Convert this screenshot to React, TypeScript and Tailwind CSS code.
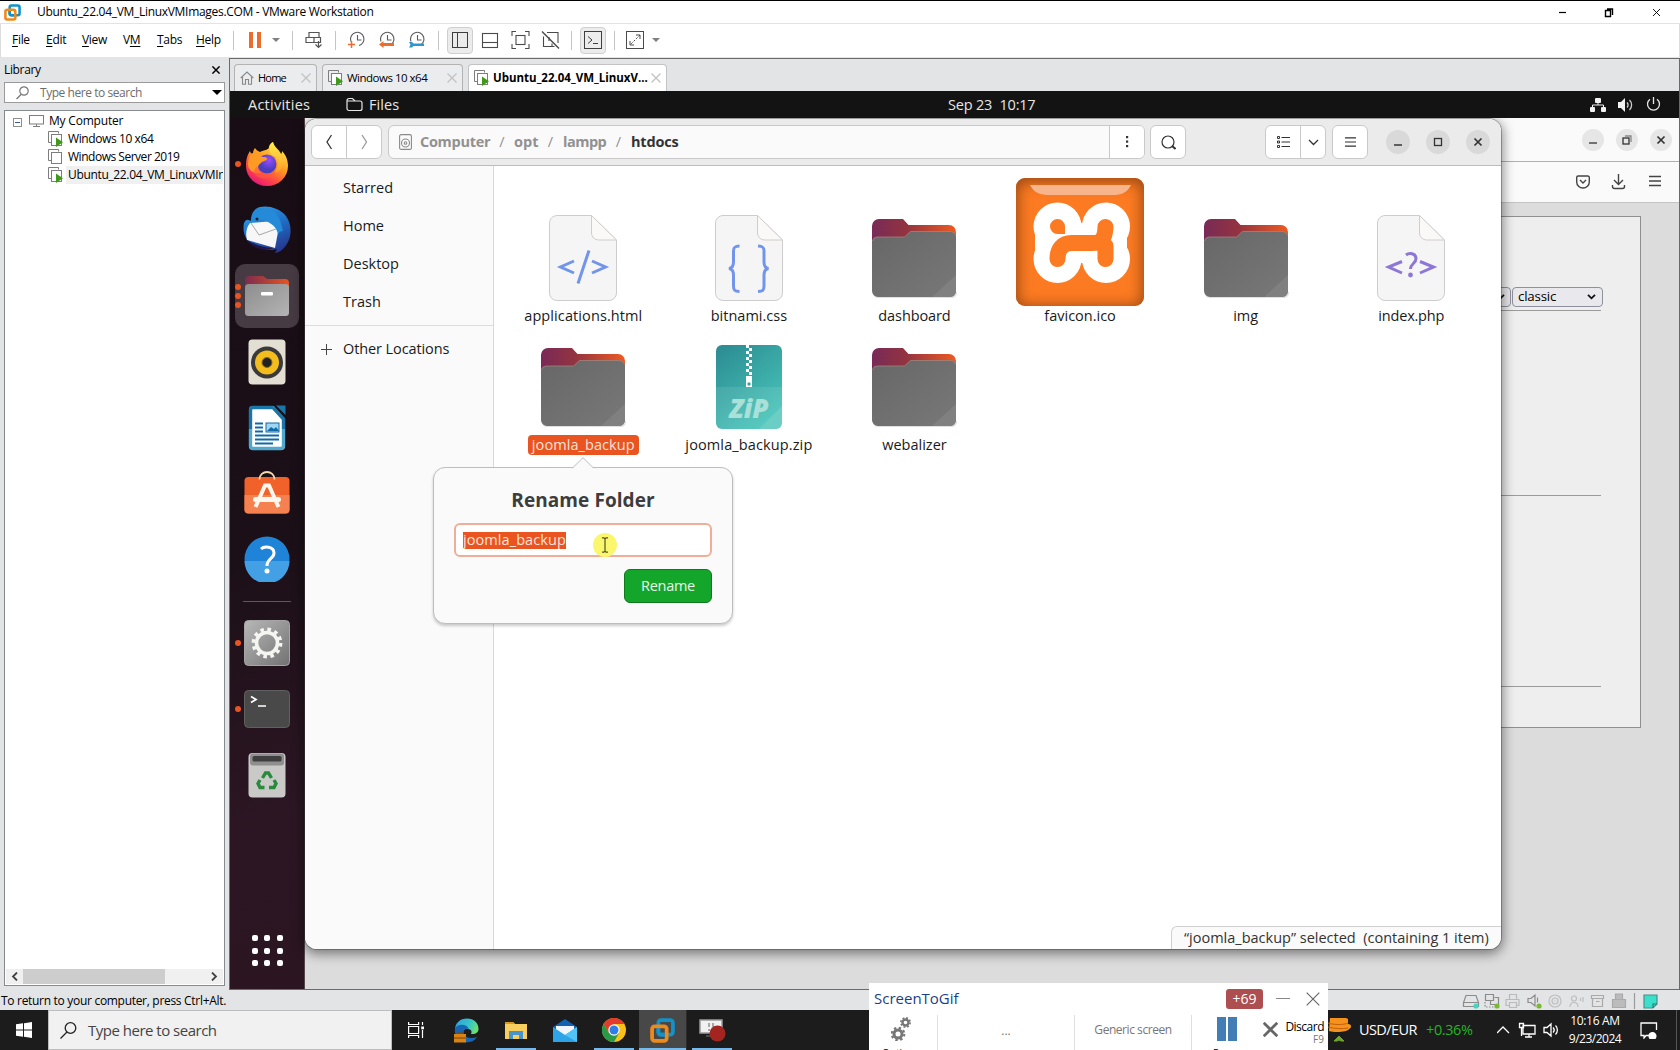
import React from "react";

const ui = "font-['Open_Sans','Noto_Sans',sans-serif]";

function T({ c = "", children }: { c?: string; children: React.ReactNode }) {
  return <span className={"whitespace-pre " + c}>{children}</span>;
}

function VmIcon({ run = true }: { run?: boolean }) {
  return (
    <svg width="16" height="16" viewBox="0 0 16 16" fill="none" stroke="#7d7d7d" className="shrink-0">
      <path d="M3.5 12V11.5H.5V.5h10v2" />
      <rect x="3.5" y="3.5" width="10" height="11" fill="#fff" />
      {run && <path d="M8 6.5l7 4.8-7 4.7z" fill="#3f9a1c" stroke="none" />}
    </svg>
  );
}

function VmwareLogo({ s }: { s: number }) {
  return (
    <svg width={s} height={s} viewBox="0 0 24 24" fill="none" strokeWidth="3.6" className="shrink-0">
      <rect x="8" y="2" width="14" height="14" rx="2.5" stroke="#1192c9" />
      <rect x="2" y="8" width="14" height="14" rx="2.5" stroke="#ee8a1c" />
      <path d="M8 10v3.500a2.500 2.500 0 002.500 2.500H14" stroke="#1192c9" />
    </svg>
  );
}

function Cross({ s, c = "#222", w = 1.2 }: { s: number; c?: string; w?: number }) {
  return (
    <svg width={s} height={s} viewBox="0 0 10 10" stroke={c} strokeWidth={w} className="shrink-0">
      <path d="M.5.5l9 9M9.500.5l-9 9" />
    </svg>
  );
}

function TitleBar() {
  return (
    <div className="flex h-[24px] shrink-0 items-center border-b border-t border-b-[#e3e3e3] border-t-black bg-white text-[12px]">
      <div className="ml-[4px] flex w-[33px] items-center"><VmwareLogo s={17} /></div>
      <T c="tracking-[-0.3px]">Ubuntu_22.04_VM_LinuxVMImages.COM - VMware Workstation</T>
      <div className="ml-auto flex items-center">
        <svg width="120" height="12" viewBox="0 0 120 12" fill="none" stroke="#000" className="mr-[9px]">
          <path d="M8 6.500h7" strokeWidth="1.200" />
          <path d="M54.500 4.500h5v6h-5zM56 3h5.500v6" strokeWidth="1.400" />
          <path d="M102 3l7 7M109 3l-7 7" strokeWidth=".9" />
        </svg>
      </div>
    </div>
  );
}

const menus: [string, string, string, string][] = [
  ["", "F", "ile", "w-[34px]"],
  ["", "E", "dit", "w-[36px]"],
  ["", "V", "iew", "w-[41px]"],
  ["V", "M", "", "w-[34px]"],
  ["", "T", "abs", "w-[39px]"],
  ["", "H", "elp", "w-[37px]"],
];

function Clock({ children }: { children: React.ReactNode }) {
  return (
    <svg width="20" height="20" viewBox="0 0 20 20" fill="none" stroke="#5a5a5a" strokeWidth="1.1">
      <path d="M4 11.500A6.700 6.700 0 1 1 12 15.500M10.500 5v5h4" />
      {children}
    </svg>
  );
}

function MenuBar() {
  const sep = <div className="h-[19px] w-px bg-[#c4c4c4]" />;
  return (
    <div className="flex h-[33px] shrink-0 items-center border-x border-[#dcdcdc] bg-white pb-px pl-[11px] text-[12px]">
      {menus.map((m, i) => (
        <div key={i} className={m[3]}>
          <T c="tracking-[-0.3px]">{m[0]}<span className="underline underline-offset-2">{m[1]}</span>{m[2]}</T>
        </div>
      ))}
      {sep}
      <div className="flex w-[58px] items-center pl-[15px]">
        <div className="h-[16px] w-[4px] bg-[#ee6b2d]" />
        <div className="ml-[4px] h-[16px] w-[4px] bg-[#ee6b2d]" />
        <div className="ml-[11px] border-x-4 border-t-4 border-x-transparent border-t-[#7f7f7f]" />
      </div>
      {sep}
      <svg width="42" height="20" viewBox="0 0 42 20" fill="none" stroke="#555" strokeWidth="1.200">
        <path d="M16 7.500V2.500h10v5M13 7.500h14.500v5H13zM21 7.500v5" />
        <path d="M25.500 11v6.500M22.500 14.500l3 3 3-3" />
      </svg>
      {sep}
      <div className="flex w-[102px] items-center gap-[10px] pl-[11px]">
        <Clock><path d="M1 14.500h7M4.500 11v7" stroke="#ee6b2d" strokeWidth="1.500" /></Clock>
        <Clock><path d="M2 14.500l4.500-3.500v2H17v3H6.500v2z" fill="#ee6b2d" stroke="none" /></Clock>
        <Clock><path d="M2 12h3l1.500 1.500H17v2.500H6.500L5 17.500H2l1.500-2.800z" fill="#2f95cf" stroke="none" /></Clock>
      </div>
      {sep}
      <div className="ml-[8px] flex h-[27px] w-[26px] items-center justify-center rounded border border-[#cfcfcf] bg-[#ececec]">
        <svg width="16" height="16" fill="none" stroke="#3f3f3f"><rect x=".5" y=".5" width="15" height="15" /><path d="M5.500 1v14" /></svg>
      </div>
      <svg width="98" height="20" viewBox="0 0 98 20" fill="none" stroke="#4a4a4a" strokeWidth="1.100">
        <rect x="9.500" y="3.500" width="15" height="14" /><path d="M10 12.500h15" />
        <path d="M39 6V1.500h4M52 1.500h4V6M56 14v4.500h-4M43 18.500h-4V14" /><rect x="43" y="5.500" width="9" height="9" />
        <path d="M69 1.500l17 17" strokeWidth="1.400" /><path d="M74 2.500h11v10.500M81.500 16.500H70.500V6.500M76 11V7M79 13.500v3" />
      </svg>
      {sep}
      <div className="ml-[8px] mr-[8px] flex h-[27px] w-[26px] items-center justify-center rounded border border-[#cfcfcf] bg-[#ececec]">
        <svg width="18" height="18" fill="none" stroke="#3f3f3f"><rect x=".5" y=".5" width="17" height="17" /><path d="M4 5.500l4 3.500-4 3.500M9 12.500h5" /></svg>
      </div>
      {sep}
      <svg width="18" height="18" fill="none" stroke="#4a4a4a" className="ml-[11px]">
        <rect x=".5" y=".5" width="17" height="17" /><path d="M10 4h4v4M4 10v4h4" /><path d="M14 4L4 14" strokeDasharray="2 1.500" />
      </svg>
      <div className="ml-[8px] border-x-4 border-t-4 border-x-transparent border-t-[#7f7f7f]" />
    </div>
  );
}

function Library() {
  return (
    <div className="flex w-[229px] shrink-0 flex-col pb-[4px] pl-[4px] pr-[4px] text-[12px]">
      <div className="flex h-[25px] items-center justify-between pr-[5px]"><T c="tracking-[-0.35px]">Library</T><Cross s={8} c="#000" w={1.800} /></div>
      <div className="flex h-[21px] items-center border border-[#9a9a9a] bg-white pl-[10px] pr-[2px] text-[#6d6d6d]">
        <svg width="15" height="14" viewBox="0 0 15 14" fill="none" stroke="#777" strokeWidth="1.200" className="mr-[10px]"><circle cx="9" cy="5" r="4.200" /><path d="M6 8.500L1.500 13" /></svg>
        <T c="tracking-[-0.45px]">Type here to search</T>
        <div className="ml-auto border-x-[5px] border-t-[5px] border-x-transparent border-t-black" />
      </div>
      <div className="mt-[7px] flex min-h-0 flex-1 flex-col overflow-hidden border border-[#868a91] bg-white p-px">
        <div className="flex h-[18px] items-center pl-[7px]">
          <svg width="9" height="9" className="mr-[7px] mt-[3px]" fill="#fff" stroke="#8d8d8d"><rect x=".5" y=".5" width="8" height="8" /><path d="M2 4.500h5" stroke="#3a55a0" /></svg>
          <svg width="15" height="12" fill="none" stroke="#7d7d7d" className="mr-[5px]"><rect x=".5" y=".5" width="14" height="8.500" /><path d="M4 11.500h7M7.500 9v2" /></svg>
          <T c="tracking-[-0.2px]">My Computer</T>
        </div>
        <div className="flex h-[18px] items-center gap-[4px] pl-[42px]"><VmIcon /><T c="tracking-[-0.4px]">Windows 10 x64</T></div>
        <div className="flex h-[18px] items-center gap-[4px] pl-[42px]"><VmIcon run={false} /><T c="tracking-[-0.48px]">Windows Server 2019</T></div>
        <div className="flex h-[18px] items-center gap-[2px] pl-[42px]">
          <VmIcon />
          <div className="flex h-[18px] flex-1 items-center overflow-hidden bg-[#f0f0f0] pl-[2px]"><T c="tracking-[-0.34px]">Ubuntu_22.04_VM_LinuxVMIr</T></div>
        </div>
        <div className="mt-auto flex h-[15px] items-center bg-[#f0f0f0] pl-[5px] pr-[5px]">
          <svg width="12" height="9" fill="none" stroke="#404040" strokeWidth="1.800"><path d="M6 .5l-4 4 4 4" /></svg>
          <div className="h-[15px] w-[142px] bg-[#cdcdcd]" />
          <svg width="7" height="9" fill="none" stroke="#404040" strokeWidth="1.800" className="ml-auto"><path d="M1 .5l4 4-4 4" /></svg>
        </div>
      </div>
    </div>
  );
}

function Tabs() {
  return (
    <div className="flex h-[32px] shrink-0 items-end pl-[4px] text-[11.500px]">
      <div className="mr-[5px] flex h-[27px] w-[83px] items-center rounded-t border border-b-0 border-[#b3b3b3] bg-[#ebecee] pl-[5px]">
        <svg width="14" height="14" fill="none" stroke="#888" strokeWidth="1.100"><path d="M.7 7L7 1l6.300 6M2.500 6v7.300h3V8.500h3v4.800h3V6" /></svg>
        <span className="ml-[4px]"><T c="text-[11px] tracking-[-0.8px]">Home</T></span>
        <span className="ml-auto mr-[5px]"><Cross s={10} c="#c3c3c3" w={1.400} /></span>
      </div>
      <div className="mr-[5px] flex h-[27px] w-[141px] items-center rounded-t border border-b-0 border-[#b3b3b3] bg-[#ebecee] pl-[5px]">
        <VmIcon /><span className="ml-[3px]"><T c="tracking-[-0.5px]">Windows 10 x64</T></span>
        <span className="ml-auto mr-[5px]"><Cross s={10} c="#c3c3c3" w={1.400} /></span>
      </div>
      <div className="flex h-[27px] w-[199px] items-center rounded-t border border-b-0 border-[#c3c3c3] bg-white pl-[5px] font-bold">
        <VmIcon /><span className="ml-[3px]"><T>Ubuntu_22.04_VM_LinuxV...</T></span>
        <span className="ml-auto mr-[5px]"><Cross s={10} c="#c3c3c3" w={1.400} /></span>
      </div>
    </div>
  );
}

function TopBar() {
  return (
    <div className="flex h-[27px] shrink-0 items-center bg-[#131313] text-[14.500px] text-[#e6e6e6]">
      <div className="w-[116px] pl-[18px]"><T c="tracking-[0.25px]">Activities</T></div>
      <svg width="17" height="15" fill="none" stroke="#e6e6e6" strokeWidth="1.200"><path d="M1 3.500a2 2 0 012-2h3.500L9 4h5a2 2 0 012 2v5.500a2 2 0 01-2 2H3a2 2 0 01-2-2zM1 4h8" /></svg>
      <div className="ml-[6px] w-[579px]"><T c="tracking-[0.1px]">Files</T></div>
      <T c="tracking-[-0.18px]">Sep 23  10:17</T>
      <div className="ml-auto mr-[18px] flex items-center gap-[12px]">
        <svg width="16" height="14" fill="#f2f2f2"><rect x="5" width="6" height="5" rx="1" /><rect y="9" width="5" height="5" rx="1" /><rect x="11" y="9" width="5" height="5" rx="1" /><path d="M2.500 10V7h11v3M8 4v3" fill="none" stroke="#f2f2f2" /></svg>
        <svg width="16" height="14" fill="#f2f2f2"><path d="M0 4h3l4-4v14l-4-4H0z" /><path d="M9 4.500a3.500 3.500 0 010 5M11.500 2a7 7 0 010 10" fill="none" stroke="#cfcfcf" strokeWidth="1.300" /></svg>
        <svg width="15" height="15" fill="none" stroke="#e6e6e6" strokeWidth="1.300"><path d="M7.500 0v7M4 2.200a6 6 0 107 0" /></svg>
      </div>
    </div>
  );
}

function Firefox() {
  return (
    <svg width="44" height="46" viewBox="0 0 44 46">
      <defs>
        <linearGradient id="ff" x1=".8" y1=".1" x2=".25" y2="1"><stop offset="0" stopColor="#ffe14a" /><stop offset=".4" stopColor="#ff9a1f" /><stop offset=".7" stopColor="#ff4a45" /><stop offset="1" stopColor="#e5127c" /></linearGradient>
        <radialGradient id="fp" cx=".6" cy=".3"><stop offset="0" stopColor="#9a4dff" /><stop offset="1" stopColor="#4a3fc0" /></radialGradient>
        <linearGradient id="fy" x1="0" y1="0" x2="0" y2="1"><stop offset="0" stopColor="#fff04a" /><stop offset="1" stopColor="#ff9a2a" /></linearGradient>
      </defs>
      <path d="M5 10c1 3 2 3 3 2 0-2 1-4 2-5 1 2 3 3 5 4C19 9 24 9 24 6c0-2 3-5 4-5 1 5 7 8 8 12 1-1 1-2 1-3 3 3 6 8 6 15a21 20 0 01-42 0C1 17 3 13 5 10z" fill="url(#ff)" />
      <path d="M28 1c-4 4-5 9-1 13 8 2 8 12 2 18 7-1 11-7 8-16-2-5-8-9-9-15z" fill="url(#fy)" />
      <circle cx="22" cy="23" r="9.500" fill="url(#fp)" />
      <path d="M6 13c4-2 8-2 11 3 3 0 5 0 5 2 0 2-5 2-6 4-4 2-4 7 0 10-9 1-13-4-13-9 0-4 2-8 3-10z" fill="#ff9a25" />
      <path d="M12 25c2 8 13 10 19 4-3 11-18 11-23 2z" fill="#ff5c3c" opacity=".6" />
    </svg>
  );
}

function Thunderbird() {
  return (
    <svg width="48" height="48" viewBox="0 0 48 48">
      <defs><linearGradient id="tb" x1=".2" y1="0" x2=".7" y2="1"><stop offset="0" stopColor="#2f9de8" /><stop offset=".5" stopColor="#1f6fc6" /><stop offset="1" stopColor="#27358c" /></linearGradient></defs>
      <path d="M13 3C20-2 36 1 43 10c7 10 6 24-3 33-3 3-7 4-8 4l2-4c-7 2-12 1-22-3C3 36-1 27 1 17 3 12 6 14 8 15 9 10 10 6 13 3z" fill="url(#tb)" />
      <path d="M7 17l24-2 4 11-3 16-28-8C2 26 4 21 7 17z" fill="#f7f7f7" />
      <path d="M8 17l8 12 17-6" fill="none" stroke="#a8a8a8" strokeWidth="1" />
      <path d="M13 3c8-3 20 0 24 11l3 11c-2 0-4 1-5 3-1-5-4-9-10-12-7-4-13-2-17 0 0-6 1-10 5-13z" fill="#258bd8" />
      <path d="M4 34c6 3 14 8 26 8-6 4-21 1-26-8z" fill="#221848" />
      <circle cx="14" cy="13" r="1.500" fill="#123" />
    </svg>
  );
}

function FilesIcon() {
  return (
    <svg width="46" height="42" viewBox="0 0 46 42">
      <defs>
        <linearGradient id="fo"><stop offset="0" stopColor="#7b2b50" /><stop offset="1" stopColor="#e95420" /></linearGradient>
        <linearGradient id="fg" x1="0" y1="0" x2="1" y2="1"><stop offset="0" stopColor="#8d8d8d" /><stop offset="1" stopColor="#b4b4b4" /></linearGradient>
      </defs>
      <path d="M1 5a4 4 0 014-4h14l4 3h18a4 4 0 014 4v12H1z" fill="url(#fo)" />
      <rect x="1" y="9" width="44" height="32" rx="3.500" fill="url(#fg)" />
      <rect x="17" y="17" width="12" height="3.500" rx="1" fill="#fff" />
    </svg>
  );
}

function DockItem({ h, dots = 0, active, children }: { h: string; dots?: number; active?: boolean; children: React.ReactNode }) {
  return (
    <div className={"relative flex w-full shrink-0 items-center justify-center " + h}>
      {active && <div className="absolute inset-x-[5px] inset-y-px rounded-[10px] bg-[#463b42]" />}
      <div className="absolute left-[5px] flex flex-col gap-[3px]">
        {Array.from({ length: dots }, (_, i) => <div key={i} className="size-[6px] rounded-full bg-[#e95420]" />)}
      </div>
      <div className="relative">{children}</div>
    </div>
  );
}

function Dock() {
  return (
    <div className="relative flex h-full w-[75px] shrink-0 flex-col border-r border-[#55454e] bg-[linear-gradient(160deg,#180d14_0%,#1c1018_50%,#2c1623_80%,#2b1521_100%)] pt-[13px]">
      <DockItem h="h-[66px]" dots={1}><Firefox /></DockItem>
      <DockItem h="h-[66px]"><Thunderbird /></DockItem>
      <DockItem h="h-[66px]" dots={3} active><FilesIcon /></DockItem>
      <DockItem h="h-[66px]">
        <svg width="38" height="46" viewBox="0 0 38 46"><rect x=".5" y=".5" width="37" height="45" rx="4" fill="#e4dfd3" /><circle cx="19" cy="23.500" r="16" fill="#3a3a3a" /><circle cx="19" cy="23.500" r="12" fill="#f2bd1d" /><circle cx="19" cy="23.500" r="5" fill="#222" stroke="#8a6a10" /></svg>
      </DockItem>
      <DockItem h="h-[66px]">
        <svg width="38" height="46" viewBox="0 0 38 46" className="-mt-px">
          <path d="M1 5a4 4 0 014-4h20l12 13v27a4 4 0 01-4 4H5a4 4 0 01-4-4z" fill="#fff" />
          <path d="M25 2.500H5A2.500 2.500 0 002.500 5v19M25 2.500L35.500 14v10" fill="none" stroke="#1a76a8" strokeWidth="3.400" />
          <path d="M2.500 24v17A2.500 2.500 0 005 43.500h28a2.500 2.500 0 002.500-2.500V24" fill="none" stroke="#4fa9cf" strokeWidth="3.400" />
          <path d="M28 .5h9.500V10z" fill="#1a76a8" />
          <path d="M7 18.500h8M7 22.500h8M7 26.500h8M7 30.500h24M7 34.500h24M7 38.500h18" stroke="#0f6aa5" strokeWidth="1.800" />
          <rect x="18" y="18" width="13" height="9" fill="#9fd6f5" stroke="#0f6aa5" /><path d="M19 26l4-4 3 2 2-2 3 4z" fill="#0f6aa5" />
        </svg>
      </DockItem>
      <DockItem h="h-[66px]">
        <svg width="46" height="44" viewBox="0 0 46 44" className="-mt-[5px]">
          <rect x=".5" y="7" width="45" height="36.500" rx="4" fill="#f0622a" /><path d="M.5 25h45v14.500a4 4 0 01-4 4h-37a4 4 0 01-4-4z" fill="#f58151" />
          <path d="M15.500 9.500c0-10 15-10 15 0" fill="none" stroke="#f7d9b0" strokeWidth="1.800" />
          <path d="M11.500 37L21 15.500h4L34.500 37" fill="none" stroke="#fff6ee" strokeWidth="4" /><rect x="9" y="27" width="28" height="5" rx="2.500" fill="#fff6ee" />
        </svg>
      </DockItem>
      <DockItem h="h-[66px]">
        <svg width="46" height="46" viewBox="0 0 46 46" className="-mt-[2px]"><circle cx="23" cy="23" r="22.500" fill="#1f83d8" /><path d="M.5 25a22.500 22.500 0 0045 0z" fill="#43a0e5" /><path d="M17 13c3-3 13-3 13 4 0 6-7 5-7 13" fill="none" stroke="#fff" strokeWidth="3" /><circle cx="23" cy="35" r="2.500" fill="#fff" /></svg>
      </DockItem>
      <div className="mx-auto mt-[8px] h-px w-[48px] shrink-0 bg-[#62555c]" />
      <DockItem h="h-[66px] mt-[8px]" dots={1}>
        <svg width="46" height="46" viewBox="0 0 46 46">
          <defs><linearGradient id="sg" x1="0" y1="0" x2="1" y2="1"><stop offset="0" stopColor="#b8b8b8" /><stop offset="1" stopColor="#727272" /></linearGradient></defs>
          <rect x=".5" y=".5" width="45" height="45" rx="4" fill="url(#sg)" stroke="#a5a5a5" />
          <circle cx="23" cy="23" r="10.500" fill="none" stroke="#f5f5f2" strokeWidth="3.600" />
          <circle cx="23" cy="23" r="13.600" fill="none" stroke="#f5f5f2" strokeWidth="3.600" strokeDasharray="3.560 3.560" />
        </svg>
      </DockItem>
      <DockItem h="h-[66px]" dots={1}>
        <svg width="46" height="38" viewBox="0 0 46 38"><rect x=".5" y=".5" width="45" height="37" rx="4" fill="#494949" stroke="#606060" /><path d="M7 6.500l5 3-5 3M14 16h8" fill="none" stroke="#fff" strokeWidth="1.700" /></svg>
      </DockItem>
      <DockItem h="h-[66px]">
        <svg width="38" height="46" viewBox="0 0 38 46">
          <rect x=".5" y="1" width="37" height="44.500" rx="4" fill="#c9c9c7" /><rect x="2" y="1.500" width="34" height="12" rx="3" fill="#8f8f8f" /><rect x="4.500" y="4" width="29" height="5.500" rx="1.500" fill="#3f3f3f" />
          <g fill="none" stroke="#2a8a3c" strokeWidth="3.400"><path d="M14.500 26l3-5h3l3 5" /><path d="M26 28l2 3.500-2 4h-5" /><path d="M12 28l-2 3.500 2 4h4.500" /></g>
        </svg>
      </DockItem>
      <div className="mx-auto mt-[127px] grid shrink-0 grid-cols-3 gap-x-[6.500px] gap-y-[6.500px]">
        {Array.from({ length: 9 }, (_, i) => <div key={i} className="size-[6px] rounded-[2px] bg-white" />)}
      </div>
    </div>
  );
}

function BrowserWindow() {
  return (
    <div className="absolute inset-y-0 left-[75px] right-0 flex flex-col bg-[#dcdcdc]">
      <div className="flex h-[44px] shrink-0 items-center justify-end gap-[12px] border-b border-[#b0b0b0] bg-[#fafafa] pr-[7px]">
        {[0, 1, 2].map((i) => (
          <div key={i} className="flex size-[22px] items-center justify-center rounded-full bg-[#e6e6e6]">
            <svg width="10" height="10" fill="none" stroke="#333" strokeWidth="1.300">
              {i === 0 && <path d="M1 8h8" />}
              {i === 1 && <><rect x="1" y="3" width="6" height="6" /><path d="M3 1h6v6" stroke="#888" /></>}
              {i === 2 && <path d="M1.500 1.500l7 7M8.500 1.500l-7 7" strokeWidth="1.700" />}
            </svg>
          </div>
        ))}
      </div>
      <div className="flex h-[41px] shrink-0 items-center justify-end border-b border-[#c4c4c4] bg-[#fafafa] pr-[18px]">
        <svg width="86" height="18" viewBox="0 0 86 18" fill="none" stroke="#444" strokeWidth="1.400">
          <path d="M1.700 4.500a1.500 1.500 0 011.500-1.500h9.600a1.500 1.500 0 011.500 1.500V9a6.300 6 0 01-12.600 0zM5 7l3 3 3-3" />
          <path d="M43.500 1v10M39 7l4.500 4.500L48 7M37.500 12v1.500a2 2 0 002 2h8a2 2 0 002-2V12" />
          <path d="M74 3.500h12M74 8h12M74 12.500h12" />
        </svg>
      </div>
      <div className="mt-[13px] h-[512px] w-[1336px] border border-[#8f8f8f] bg-[#eee] pr-[39px] pt-[70px]">
        <div className="flex h-[24px] justify-end border-b border-[#9b9b9b] pb-[3px]">
          <div className="flex h-[20px] w-[60px] items-center justify-end rounded border border-[#8f8f9d] bg-[#e9e9ed] pr-[5px]"><svg width="9" height="6" fill="none" stroke="#111" strokeWidth="1.800"><path d="M1 .8l3.500 3.500L8 .8" /></svg></div>
          <div className="ml-px mr-[-2px] flex h-[20px] w-[91px] items-center justify-between rounded border border-[#8f8f9d] bg-[#e9e9ed] pl-[5px] pr-[6px] text-[13.300px]"><T c="tracking-[-0.2px]">classic</T><svg width="9" height="6" fill="none" stroke="#111" strokeWidth="1.800"><path d="M1 .8l3.500 3.500L8 .8" /></svg></div>
        </div>
        <div className="h-[185px] border-b border-[#9b9b9b]" />
        <div className="h-[191px] border-b border-[#9b9b9b]" />
      </div>
    </div>
  );
}

function Folder() {
  return (
    <svg width="92" height="92" viewBox="0 0 92 92">
      <defs>
        <linearGradient id="fb"><stop offset="0" stopColor="#792a58" /><stop offset=".4" stopColor="#923340" /><stop offset="1" stopColor="#ee5a22" /></linearGradient>
        <linearGradient id="ff2" x1="0" y1="0" x2="1" y2="1"><stop offset="0" stopColor="#676767" /><stop offset="1" stopColor="#787878" /></linearGradient>
      </defs>
      <path d="M6 78a4 4 0 004 6h73c4 0 6-2 6-6z" fill="#000" opacity=".12" />
      <path d="M4 12a7 7 0 017-7h24l5.500 6H81a7 7 0 017 7v26H4z" fill="url(#fb)" />
      <path d="M4 28a5 5 0 015-5h27.500l6-5.500H83a5 5 0 015 5V77a6 6 0 01-6 6H10a6 6 0 01-6-6z" fill="url(#ff2)" />
      <path d="M4.500 27a5 5 0 014.500-4h27.500l6-5.500H83a5 5 0 014.500 4" fill="none" stroke="#9d8580" strokeWidth=".8" />
      <path d="M88 61v16a6 6 0 01-6 6H64z" fill="#808080" />
    </svg>
  );
}

function Page({ kind }: { kind: "html" | "css" | "php" }) {
  return (
    <svg width="92" height="92" viewBox="0 0 92 92" fill="none">
      <path d="M12.500 9a7.500 7.500 0 017.500-7.500h34.500L79.500 26v53a7.500 7.500 0 01-7.500 7.500H20a7.500 7.500 0 01-7.500-7.500z" fill="#f5f5f5" stroke="#cdcdcd" />
      <path d="M54.500 1.500V19a7 7 0 007 7h18z" fill="#faf9f7" stroke="#cfcecc" />
      {kind === "html" && <g stroke="#7295ea" strokeWidth="3"><path d="M37 47L23.500 53 37 59M55 47l13.500 6L55 59M52 36.500L41 69.500" /></g>}
      {kind === "css" && <g stroke="#7295ea" strokeWidth="3"><path d="M36.500 32c-5 0-6 1.500-6 5v11c0 4-1.500 6-4.500 6.500 3 .5 4.500 2 4.500 6.500v11c0 4 1 5.500 6 5.500M55 32c5 0 6 1.500 6 5v11c0 4 1.500 6 4.500 6.500-3 .5-4.500 2-4.500 6.500v11c0 4-1 5.500-6 5.500" /></g>}
      {kind === "php" && <g stroke="#8d76d6" strokeWidth="3"><path d="M37 47.500L23.500 53 37 59M55 47.500l13.500 5.500L55 59M41 41c3-2.500 10-2 10 3.500 0 5-5.500 5-5.500 10.500" /><circle cx="45.500" cy="61" r="2.400" fill="#8d76d6" stroke="none" /></g>}
    </svg>
  );
}

function Zip() {
  return (
    <svg width="92" height="92" viewBox="0 0 92 92">
      <defs><linearGradient id="zg" x1="0" y1="0" x2=".6" y2="1"><stop offset="0" stopColor="#2b8a91" /><stop offset="1" stopColor="#47c3b8" /></linearGradient></defs>
      <rect x="13" y="2" width="66" height="84" rx="6" fill="url(#zg)" />
      <path d="M13 44h66v36a6 6 0 01-6 6H19a6 6 0 01-6-6z" fill="#fff" opacity=".09" />
      <path d="M79 63v17a6 6 0 01-6 6H56z" fill="#fff" opacity=".12" />
      <path d="M44.500 2v30" stroke="#fff" strokeWidth="3" strokeDasharray="3 3" /><path d="M47.500 5v30" stroke="#fff" strokeWidth="3" strokeDasharray="3 3" />
      <path d="M43 33h6v11h-6z" fill="#fff" /><circle cx="46" cy="41" r="1.700" fill="#3aa6a0" />
      <text x="46" y="75" textAnchor="middle" fontSize="26" fontWeight="800" fontStyle="italic" textLength="39" lengthAdjust="spacingAndGlyphs" fill="#a9e0d8" fontFamily="Open Sans, sans-serif">ZiP</text>
    </svg>
  );
}

function Xampp() {
  return (
    <div className="size-[128px] shrink-0 rounded-[9px] bg-[#fb7a22] shadow-[inset_0_2px_14px_2px_#9a4a14]">
      <svg width="128" height="128" viewBox="0 0 128 128">
        <path d="M14 7h101c-4 8-10 10-18 10H34C24 17 18 15 14 7z" fill="#f8b48a" />
        <g fill="#fff"><circle cx="41.500" cy="48.500" r="24" /><circle cx="90" cy="48.500" r="24" /><circle cx="41.500" cy="81" r="24" /><circle cx="90" cy="81" r="24" /><path d="M41 45h49v40H41zM19 54h20v22H19zM93 54h18v22H93z" /></g>
        <path d="M34 48.500a7.500 7.500 0 0115 0V56h-7.500a7.500 7.500 0 01-7.500-7.500z" fill="#fb7a22" />
        <path d="M41.500 81c0-10 5-16 14-16H77c8 0 12-4 12.500-16M89.500 81V68" fill="none" stroke="#fb7a22" strokeWidth="16" strokeLinecap="round" />
      </svg>
    </div>
  );
}

const files: { name: string; c?: string; icon: React.ReactNode; selected?: boolean }[] = [
  { name: "applications.html", c: "tracking-[0.1px]", icon: <Page kind="html" /> },
  { name: "bitnami.css", icon: <Page kind="css" /> },
  { name: "dashboard", c: "tracking-[-0.1px]", icon: <Folder /> },
  { name: "favicon.ico", icon: <Xampp /> },
  { name: "img", icon: <Folder /> },
  { name: "index.php", c: "tracking-[-0.2px]", icon: <Page kind="php" /> },
  { name: "joomla_backup", c: "tracking-[0.08px]", icon: <Folder />, selected: true },
  { name: "joomla_backup.zip", c: "tracking-[0.12px]", icon: <Zip /> },
  { name: "webalizer", icon: <Folder /> },
];

function FilesHeader() {
  const box = "flex h-[34px] items-center justify-center rounded-[6px] border border-[#c9c9c9] bg-white";
  return (
    <div className="flex h-[47px] shrink-0 items-center border-b border-[#bcbcbc] bg-[#ebebeb] pl-[6px] pr-[11px]">
      <div className={box + " w-[71px]"}>
        <div className="flex h-full flex-1 items-center justify-center border-r border-[#c9c9c9]"><svg width="7" height="16" fill="none" stroke="#333" strokeWidth="1.300"><path d="M5.500 1L1 8l4.500 7" /></svg></div>
        <div className="flex h-full flex-1 items-center justify-center"><svg width="7" height="16" fill="none" stroke="#999" strokeWidth="1.300"><path d="M1 1l4.500 7L1 15" /></svg></div>
      </div>
      <div className={box + " ml-[6px] mr-[5px] w-[757px] !justify-start overflow-hidden !bg-[#fafafa] text-[14.500px] font-bold text-[#919191]"}>
        <svg width="13" height="16" fill="none" stroke="#8a8a8a" strokeWidth="1.100" className="ml-[10px] mr-[8px]"><rect x=".6" y=".6" width="11.800" height="14.800" rx="1.500" /><circle cx="6.500" cy="9" r="4" /><circle cx="6.500" cy="9" r="1.300" /></svg>
        <div className="w-[70px]"><T c="tracking-[-0.3px]">Computer</T></div><span className="w-[24px] text-center font-normal">/</span>
        <div className="w-[24px]"><T>opt</T></div><span className="w-[25px] text-center font-normal">/</span>
        <div className="w-[43px]"><T c="tracking-[-0.5px]">lampp</T></div><span className="w-[25px] text-center font-normal">/</span>
        <div className="text-[#333]"><T c="tracking-[-0.2px]">htdocs</T></div>
        <div className="ml-auto flex h-full w-[35px] items-center justify-center border-l border-[#c9c9c9] bg-white">
          <svg width="3" height="12" fill="#333"><rect width="2.200" height="2.200" /><rect y="4.500" width="2.200" height="2.200" /><rect y="9" width="2.200" height="2.200" /></svg>
        </div>
      </div>
      <div className={box + " w-[36px]"}>
        <svg width="15" height="15" fill="none" stroke="#333" strokeWidth="1.200"><circle cx="7" cy="7" r="6" /><path d="M11 11l3.500 3" strokeWidth="2" /></svg>
      </div>
      <div className={box + " ml-auto w-[61px]"}>
        <div className="flex h-full w-[35px] items-center justify-center border-r border-[#c9c9c9]">
          <svg width="13" height="12" fill="none" stroke="#333"><path d="M4.500 1.500H13M4.500 6H13M4.500 10.500H13" strokeWidth="1.200" /><path d="M.5.500h2v2h-2zM.5 5h2v2h-2zM.5 9.500h2v2h-2z" /></svg>
        </div>
        <div className="flex flex-1 justify-center"><svg width="11" height="7" fill="none" stroke="#333" strokeWidth="1.300"><path d="M1 1l4.500 4.500L10 1" /></svg></div>
      </div>
      <div className={box + " ml-[6px] w-[36px]"}><svg width="11" height="10" stroke="#333" strokeWidth="1.200"><path d="M0 .8h11M0 5h11M0 9.200h11" /></svg></div>
      <div className="ml-[18px] flex gap-[16px]">
        {[0, 1, 2].map((i) => (
          <div key={i} className="flex size-[24px] items-center justify-center rounded-full bg-[#d9d9d9]">
            <svg width="10" height="10" fill="none" stroke="#333" strokeWidth="1.300">
              {i === 0 && <path d="M1 8h8" />}{i === 1 && <rect x="1.500" y="1.500" width="7" height="7" />}{i === 2 && <path d="M1.500 1.500l7 7M8.500 1.500l-7 7" strokeWidth="1.700" />}
            </svg>
          </div>
        ))}
      </div>
    </div>
  );
}

function FilesWindow() {
  return (
    <div className="absolute left-[75px] top-px flex h-[830px] w-[1196px] flex-col overflow-hidden rounded-[12px] bg-white text-[14.500px] text-[#1a1a1a] shadow-[0_3px_12px_2px_rgba(0,0,0,0.45),0_0_0_1px_rgba(0,0,0,0.25)]">
      <FilesHeader />
      <div className="flex min-h-0 flex-1">
        <div className="w-[189px] shrink-0 border-r border-[#d8d8d8] bg-[#fafafa] pt-[3px]">
          {["Starred", "Home", "Desktop", "Trash"].map((s) => <div key={s} className="flex h-[38px] items-center pl-[38px]"><T>{s}</T></div>)}
          <div className="mt-[4px] h-px bg-[#dcdcdc]" />
          <div className="mt-[4px] flex h-[38px] items-center pl-[16px]">
            <svg width="12" height="12" stroke="#444" className="mr-[10px]"><path d="M0 6.500h11M5.500 1v11" /></svg><T c="tracking-[-0.1px]">Other Locations</T>
          </div>
        </div>
        <div className="flex flex-1 flex-col">
          <div className="grid grid-cols-[repeat(6,165.600px)] auto-rows-[129px] pl-[6.500px] pt-[31px]">
            {files.map((f) => (
              <div key={f.name} className="flex flex-col items-center justify-end">
                {f.icon}
                <div className={"flex h-[20px] items-center rounded-[4px] px-[4px] " + (f.selected ? "bg-[#e95420] text-[#fbe3da]" : "")}><T c={f.c}>{f.name}</T></div>
              </div>
            ))}
          </div>
          <div className="ml-auto mt-auto flex h-[23px] w-[330px] items-center rounded-tl-[6px] border-l border-t border-[#d0d0d0] bg-[#fafafa] pl-[12px] text-[#333]"><T>“joomla_backup” selected  (containing 1 item)</T></div>
        </div>
      </div>
    </div>
  );
}

function RenamePopover() {
  return (
    <div className="absolute left-[203px] top-[349px] flex h-[157px] w-[300px] flex-col items-center rounded-[12px] border border-[#bdbdbd] bg-[#fafafa] px-[20px] shadow-[0_2px_3px_rgba(0,0,0,0.2)]">
      <svg width="24" height="12" viewBox="0 0 24 12" className="absolute -top-[11px] left-[137px]"><path d="M0 12L1.500 11 12 .7 22.500 11 24 12z" fill="#fafafa" /><path d="M1 10.700h.8L12 .7l10.200 10h.8" fill="none" stroke="#bdbdbd" /></svg>
      <div className="mt-[18px] h-[28px] text-[19px] font-bold leading-[28px] text-[#3d3d3d]"><T c="tracking-[0.08px]">Rename Folder</T></div>
      <div className="relative mt-[9px] flex h-[34px] w-full items-center rounded-[6px] border-2 border-[#eeae98] bg-white pl-[7px] text-[14.500px]">
        <div className="flex h-[17px] items-center bg-[#e95420] text-[#fbe3da]"><T c="tracking-[0.08px]">joomla_backup</T></div>
        <div className="absolute left-[137px] top-[8px] flex size-[24px] items-center justify-center rounded-full bg-[#faf66e]">
          <svg width="8" height="16" fill="none" stroke="#55541c" strokeWidth="1.200"><path d="M1 .8h2l1 1 1-1h2M4 2v12M1 15.200h2l1-1 1 1h2" /></svg>
        </div>
      </div>
      <div className="ml-auto mt-[12px] flex h-[34px] w-[88px] items-center justify-center rounded-[6px] border border-[#0d7a1c] bg-[#14a52b] text-[14.500px] text-[#e4f7e7]"><T c="tracking-[-0.3px]">Rename</T></div>
    </div>
  );
}

function StatusBar() {
  return (
    <div className="flex h-[20px] shrink-0 items-center pl-px pt-px text-[12px]">
      <T c="tracking-[-0.3px]">To return to your computer, press Ctrl+Alt.</T>
      <svg width="198" height="16" viewBox="0 0 198 16" fill="none" stroke="#8b8b8b" strokeWidth="1.200" className="ml-auto mr-[20px]">
        <path d="M4 2.500h10l2.500 7v4H1.500v-4zM1.500 9.500h15" /><circle cx="14" cy="13" r="2.600" fill="#3fd6c4" stroke="none" />
        <path d="M23.500 1.500h8v6h-8zM28.500 7.500v4h8v-7h-4" /><path d="M23 9v5h10" strokeDasharray="1.500 1.500" /><circle cx="35" cy="13" r="2.600" fill="#7ab82f" stroke="none" />
        <path d="M47.500 6.500v-5h7v5M47 12.500h-3v-6h13v6h-3M47.500 9.500h7v5h-7z" stroke="#b9babc" />
        <path d="M66 5.500h3l4-3.500v11l-4-3.500h-3zM75.500 4.500v5" /><circle cx="77" cy="13" r="2.600" fill="#7ab82f" stroke="none" />
        <g stroke="#bdbec0"><circle cx="93" cy="8" r="6" /><circle cx="93" cy="8" r="3" /><path d="M93 7.500v1" /><circle cx="112" cy="5.500" r="2.500" /><path d="M108 14c0-6 8-6 8 0M118.500 5v3M121 4v5" /></g>
        <path d="M129.500 2.500h12v3h-12zM130.500 5.500v8h10v-8M134 8.500h3.500" stroke="#aaa" />
        <path d="M150.500 6.500h13v8h-13zM153.500 6v-5h7v5" fill="#bbb" stroke="#aaa" />
        <path d="M172.500 0v16" stroke="#9a9a9a" />
        <path d="M182 2h13v9l-4 4h-9z" fill="#3be0cd" stroke="#4a8f88" /><path d="M195 11h-4v4" stroke="#2a7a74" />
      </svg>
    </div>
  );
}

function Taskbar() {
  return (
    <div className="flex h-[40px] shrink-0 bg-[#1c1c1c] text-white">
      <div className="flex w-[48px] items-center justify-center"><svg width="16" height="16" fill="#fff"><path d="M0 2.300L7 1.300v6.200H0zM8 1.200L16 0v7.500H8zM0 8.500h7v6.200l-7-1zM8 8.500h8V16l-8-1.200z" /></svg></div>
      <div className="flex w-[344px] items-center border border-[#bdbdbd] bg-[#f1f1f1] pl-[11px] text-[15px] text-[#444]">
        <svg width="17" height="17" fill="none" stroke="#222" strokeWidth="1.300" className="mr-[11px]"><circle cx="10.500" cy="6" r="5.300" /><path d="M7 10L.5 16.500" /></svg>
        <T c="tracking-[-0.5px]">Type here to search</T>
      </div>
      <div className="flex w-[48px] items-center justify-center"><svg width="16" height="16" fill="none" stroke="#fff" strokeWidth="1.200"><path d="M.6 0v2.500h10V0M.6 4.500h10v7H.600zM.6 16v-2.500h10V16M14.500 0v3M14.500 8v8" /><rect x="13.200" y="4.500" width="2.800" height="2.800" fill="#fff" stroke="none" /></svg></div>
      <div className="ml-[2px] flex w-[49px] items-center justify-center">
        <svg width="25" height="25" viewBox="0 0 25 25">
          <defs><linearGradient id="eg" y1=".2" y2=".5"><stop offset="0" stopColor="#2fa3e0" /><stop offset=".6" stopColor="#36c5c8" /><stop offset="1" stopColor="#6be070" /></linearGradient></defs>
          <path d="M1 12C1 5 6 .5 13 .5S24.500 5 24.500 11c0 4-4 5.500-7.500 5 1-2 1-4.500-3-5C9 10 3 12 1 12z" fill="url(#eg)" />
          <path d="M1 10c4-5 12-4 14 1-4-1-6 2-5 5 1 4 7 5 13 3-3 5-9 6-14 5C3 22 0 16 1 10z" fill="#1765b5" />
          <rect x="0" y="16" width="12" height="8.500" fill="#d98314" /><path d="M4 16v-2h4v2M0 20h12" stroke="#7a4508" fill="none" />
        </svg>
      </div>
      <div className="relative flex w-[49px] items-center justify-center">
        <svg width="22" height="19"><path d="M0 1h8l2 2h12v15H0z" fill="#f8cf5f" /><path d="M0 1h8l2 2H0z" fill="#d9991c" /><path d="M4 18v-8h14v8h-4v-4H8v4z" fill="#4694c9" /></svg>
        <div className="absolute bottom-0 h-[2px] w-[40px] bg-[#76b9ed]" />
      </div>
      <div className="flex w-[49px] items-center justify-center"><svg width="24" height="23"><path d="M0 8l12-8 12 8v14H0z" fill="#1262b0" /><path d="M3 7h18v9H3z" fill="#f2f6fa" /><path d="M0 8l12 8 12-8v15H0z" fill="#2ea4e8" /><path d="M24 8v15L12 16z" fill="#4fc4f5" /></svg></div>
      <div className="relative flex w-[49px] items-center justify-center">
        <svg width="24" height="24" viewBox="0 0 24 24"><circle cx="12" cy="12" r="12" fill="#fbc116" /><path d="M1.600 6A12 12 0 0122.400 6H12L7 15z" fill="#e33b2e" /><path d="M1.600 6A12 12 0 0012 24l5-9-10 0z" fill="#2a9a48" /><circle cx="12" cy="12" r="5.700" fill="#fff" /><circle cx="12" cy="12" r="4.500" fill="#2f7de8" /></svg>
        <div className="absolute bottom-0 h-[2px] w-[40px] bg-[#76b9ed]" />
      </div>
      <div className="relative ml-px flex w-[48px] items-center justify-center border-r border-[#2c2c2c] bg-[#484848]"><VmwareLogo s={25} /><div className="absolute inset-x-0 bottom-0 h-[2px] bg-[#76b9ed]" /></div>
      <div className="relative flex w-[49px] items-center justify-center">
        <svg width="27" height="24" className="ml-[2px]"><path d="M1 2h22v13H1z" fill="#f1f1f1" stroke="#9a9a9a" strokeWidth="1.500" /><path d="M10 5v4M14 5v4M10 11v2M14 11v2M7 18h6" stroke="#777" strokeWidth="1.200" /><circle cx="18.500" cy="15.500" r="8" fill="#a2261f" /></svg>
        <div className="absolute bottom-0 h-[2px] w-[40px] bg-[#76b9ed]" />
      </div>
      <div className="ml-auto flex items-center text-[14.500px]">
        <svg width="24" height="24" viewBox="0 0 24 24" className="mr-[7px]"><path d="M2 0c6-1 16-1 18 1v5c4 0 4 4 1 5-1 3-14 4-20 2z" fill="#f5921e" /><path d="M0 5c6 2 16 2 20 0M0 9c8 2 14 2 20 1" stroke="#c05f0c" fill="none" /><path d="M6 23l5-5 5 5h-3l-2-1-2 1z" fill="#6fa52c" stroke="#6fa52c" /></svg>
        <div className="w-[67px]"><T c="tracking-[-0.6px]">USD/EUR</T></div>
        <div className="w-[71px] text-[#23b523]"><T c="tracking-[-0.4px]">+0.36%</T></div>
        <svg width="63" height="16" fill="none" stroke="#fff" strokeWidth="1.300">
          <path d="M0 11l6-6 6 6" /><path d="M26 3.500h12v8.500H26zM28 15h7M32 12v3M22.500 1.500h4v4h-4zM24.500 6v8" />
          <path d="M47 5.500h3L54 2v12l-4-3.500h-3zM56 5.500c1.500 1.500 1.500 3.500 0 5M58.500 3.500c2.500 2.500 2.500 6.500 0 9" />
        </svg>
        <div className="ml-[2px] flex w-[66px] flex-col items-center text-[12px] leading-[18px]"><T c="tracking-[-0.3px]">10:16 AM</T><T c="tracking-[-0.5px]">9/23/2024</T></div>
        <svg width="18" height="17" fill="none" stroke="#fff" strokeWidth="1.300" className="ml-[12px] mr-[18px]"><path d="M10 13.500H6l-2 2.500v-2.500H1V1h15.500v7" /><path d="M12 10a4 4 0 104.500 4.500A4 4 0 0012 10z" fill="#fff" stroke="none" /></svg>
        <div className="mr-[3px] h-[40px] w-px bg-[#555]" />
      </div>
    </div>
  );
}

function ScreenToGif() {
  return (
    <div className="absolute left-[869px] top-[983px] flex h-[67px] w-[459px] flex-col overflow-hidden bg-white">
      <div className="flex h-[32px] shrink-0 items-center pb-px pl-[5px] pr-[8px] text-[15px] text-[#1b3f87]">
        <T>ScreenToGif</T>
        <div className="ml-auto flex h-[20px] w-[37px] items-center justify-center rounded-[3px] bg-[#ad4e50] text-[14px] text-white"><T>+69</T></div>
        <div className="ml-[13px] mr-[16px] h-[1.500px] w-[14px] bg-[#888]" />
        <Cross s={14} c="#666" w={0.800} />
      </div>
      <div className="flex h-[35px] shrink-0 text-[12px] text-[#777]">
        <div className="w-[69px] shrink-0 border-r border-[#dedede]">
          <svg width="20" height="24" viewBox="0 0 20 24" className="ml-[22px] mt-[2px]" fill="none" stroke="#777"><circle cx="7" cy="17" r="4" strokeWidth="3" /><circle cx="7" cy="17" r="6.300" strokeWidth="2" strokeDasharray="2.470 2.470" /><circle cx="14.500" cy="5.500" r="3" strokeWidth="2.400" /><circle cx="14.500" cy="5.500" r="4.700" strokeWidth="1.600" strokeDasharray="1.850 1.850" /></svg>
          <div className="ml-[13px] mt-[5px] text-[10px] text-black">Options</div>
        </div>
        <div className="flex w-[137px] shrink-0 items-center justify-center border-r border-[#dedede] pb-[3px]">...</div>
        <div className="flex w-[117px] shrink-0 items-center justify-center border-r border-[#dedede] pb-[5px]"><T c="tracking-[-0.45px]">Generic screen</T></div>
        <div className="w-[71px] shrink-0 pl-[25px] pt-[2px]">
          <div className="flex gap-[2px]"><div className="h-[24px] w-[9px] bg-[#427db5]" /><div className="h-[24px] w-[9px] bg-[#427db5]" /></div>
          <div className="-ml-[4px] mt-[5px] text-[10px] text-black">Pause</div>
        </div>
        <div className="mt-[7px]"><Cross s={15} c="#666" w={1.800} /></div>
        <div className="ml-auto mr-[4px] flex flex-col items-end pt-[4px] text-black"><T c="h-[16px] leading-[16px] tracking-[-0.5px]">Discard</T><T c="h-[8px] text-[10px] leading-[8px] text-[#777]">F9</T></div>
      </div>
    </div>
  );
}

export default function App() {
  return (
    <div className={"relative flex h-[1050px] w-[1680px] flex-col overflow-hidden bg-[#e3e4e6] text-black " + ui}>
      <TitleBar />
      <MenuBar />
      <div className="flex min-h-0 flex-1">
        <Library />
        <div className="mt-px flex min-w-0 flex-1 flex-col border border-[#6a6a6a]">
          <Tabs />
          <div className="flex min-h-0 flex-1 flex-col">
            <TopBar />
            <div className="relative min-h-0 flex-1 overflow-hidden">
              <BrowserWindow />
              <Dock />
              <FilesWindow />
              <RenamePopover />
            </div>
          </div>
        </div>
      </div>
      <StatusBar />
      <Taskbar />
      <ScreenToGif />
    </div>
  );
}
